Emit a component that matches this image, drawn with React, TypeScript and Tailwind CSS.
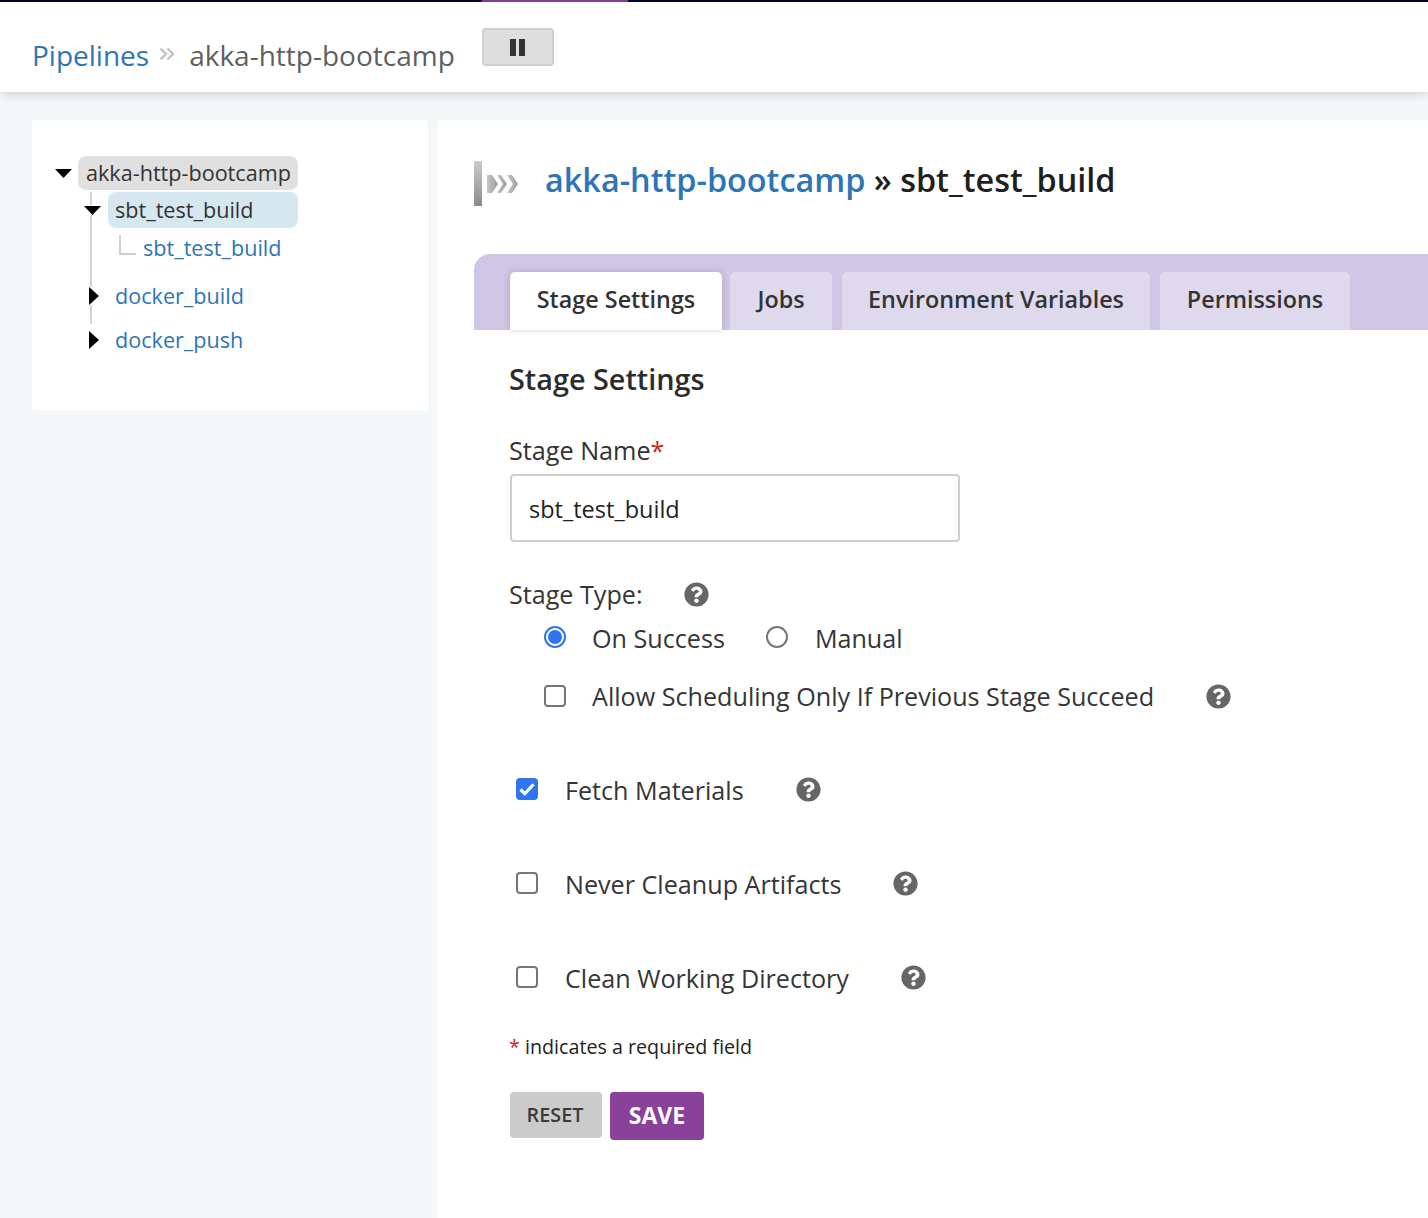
import { ReactNode } from "react";

const HelpIcon = () => (
  <svg width="25" height="25" viewBox="0 0 512 512" className="shrink-0 block">
    <path fill="#666666" d="M504 256c0 136.997-111.043 248-248 248S8 392.997 8 256C8 119.083 119.043 8 256 8s248 111.083 248 248zM262.655 90c-54.497 0-89.255 22.957-116.549 63.758-3.536 5.286-2.353 12.415 2.715 16.258l34.699 26.31c5.205 3.947 12.621 3.008 16.665-2.122 17.864-22.658 30.113-35.797 57.303-35.797 20.429 0 45.698 13.148 45.698 32.958 0 14.976-12.363 22.667-32.534 33.976C247.128 238.528 216 254.941 216 296v4c0 6.627 5.373 12 12 12h56c6.627 0 12-5.373 12-12v-1.333c0-28.462 83.186-29.647 83.186-106.667 0-58.002-60.165-102-116.531-102zM256 338c-25.365 0-46 20.635-46 46 0 25.364 20.635 46 46 46s46-20.636 46-46c0-25.365-20.635-46-46-46z" />
  </svg>
);

const CaretDown = () => (
  <svg width="17" height="10" viewBox="0 0 17 10" className="block"><path d="M0 1h17L8.5 10z" fill="#000" /></svg>
);

const CaretRight = () => (
  <svg width="10" height="18" viewBox="0 0 10 18" className="block"><path d="M0 0l10 9-10 9z" fill="#000" /></svg>
);

const Checkbox = ({ checked }: { checked?: boolean }) =>
  checked ? (
    <span className="block w-[22px] h-[22px] rounded-[4px] bg-[#2f74f0] flex items-center justify-center shrink-0">
      <svg width="18" height="18" viewBox="0 0 18 18" fill="none"><path d="M2.5 9.5l4.3 4.3 8.7-9.6" stroke="#fff" strokeWidth="3.2" /></svg>
    </span>
  ) : (
    <span className="block w-[22px] h-[22px] rounded-[4px] border-2 border-[#767676] bg-white shrink-0" />
  );

const CheckRow = ({ label, checked, cls }: { label: string; checked?: boolean; cls: string }) => (
  <div className={"flex items-center h-[30px] " + cls}>
    <span className="ml-[7px] mr-[27px] mb-[2px]"><Checkbox checked={checked} /></span>
    <span className="text-[25.15px] text-[#363636] relative top-px">{label}</span>
    <span className="ml-[52px] relative -top-px"><HelpIcon /></span>
  </div>
);

const Tab = ({ children, active, cls }: { children: ReactNode; active?: boolean; cls: string }) => (
  <div className={"h-[58px] pb-[2px] rounded-t-[5px] flex items-center justify-center text-[23.35px] font-semibold text-[#333] " + (active ? "bg-white shadow-[0_0_6px_rgba(0,0,0,0.18)] " : "bg-[#dfd9ee] ") + cls}>
    {children}
  </div>
);

export default function App() {
  return (
    <div className="w-[1428px] h-[1218px] overflow-hidden bg-[#f4f8f9] font-['Open_Sans',sans-serif] text-[#333]">
      <div className="h-[2px] bg-[#000728] flex">
        <div className="ml-[482px] w-[146px] bg-[#8a4199]" />
      </div>
      <header className="h-[90px] bg-white shadow-[0_2px_10px_rgba(0,0,0,0.16)] relative flex items-start pl-[32px]">
        <a className="text-[28px] text-[#2e75b6] mt-[34px] leading-[38px]">Pipelines</a>
        <svg width="16" height="14" viewBox="0 0 16 14" fill="none" className="ml-[10px] mt-[45px]">
          <path d="M1.5 1.5l5.5 5.500-5.500 5.500M8.500 1.500l5.500 5.500-5.500 5.500" stroke="#c2c2c2" strokeWidth="2.400" />
        </svg>
        <span className="text-[28px] text-[#5f5f5f] ml-[14px] mt-[34px] leading-[38px]">akka-http-bootcamp</span>
        <button className="ml-[27px] mt-[26px] w-[72px] h-[38px] rounded-[4px] bg-[#dedede] border-2 border-[#cfcfcf] flex items-center justify-center gap-[3px]">
          <span className="w-[6px] h-[17px] bg-[#333]" />
          <span className="w-[6px] h-[17px] bg-[#333]" />
        </button>
      </header>

      <div className="flex items-start pt-[28px] pl-[32px]">
        <aside className="w-[396px] h-[290px] bg-white rounded-[4px] shrink-0 pt-[36px] text-[21.6px]">
          <div className="relative h-[254px]">
            <span className="absolute left-[58px] top-[36px] w-[2px] h-[132px] bg-[#d4d4d4]" />
            <div className="flex items-center">
              <span className="ml-[23px] mr-[6px]"><CaretDown /></span>
              <span className="w-[220px] h-[34px] leading-[33px] pl-[8px] bg-[#e0e0e0] rounded-[8px] text-[#333] whitespace-nowrap">akka-http-bootcamp</span>
            </div>
            <div className="flex items-center mt-[2px]">
              <span className="ml-[52px] mr-[7px] relative bg-white"><CaretDown /></span>
              <span className="w-[190px] h-[36px] leading-[35px] pl-[7px] bg-[#d6e8ef] rounded-[8px] text-[#333]">sbt_test_build</span>
            </div>
            <div className="flex items-center h-[40px] pl-[87px]">
              <span className="w-[17px] h-[20px] border-l-2 border-b-2 border-[#cfcfcf] mb-[6px] mr-[7px]" />
              <a className="text-[#2e75b6]">sbt_test_build</a>
            </div>
            <div className="flex items-center h-[36px] mt-[10px]">
              <span className="ml-[57px] mr-[16px] relative bg-white flex"><CaretRight /></span>
              <a className="text-[#2e75b6]">docker_build</a>
            </div>
            <div className="flex items-center h-[36px] mt-[8px]">
              <span className="ml-[57px] mr-[16px] relative bg-white flex"><CaretRight /></span>
              <a className="text-[#2e75b6]">docker_push</a>
            </div>
          </div>
        </aside>

        <main className="ml-[10px] w-[990px] h-[1098px] bg-white pl-[36px] rounded-tl-[4px]">
          <div className="flex items-start h-[46px] mt-[38px]">
            <svg width="46" height="46" viewBox="0 0 46 46" className="shrink-0 mt-[3px]">
              <defs>
                <linearGradient id="bar" x1="0" y1="0" x2="0" y2="1">
                  <stop offset="0" stopColor="#cccccc" />
                  <stop offset="1" stopColor="#8a8a8a" />
                </linearGradient>
                <linearGradient id="chev" x1="0" y1="0" x2="1" y2="0">
                  <stop offset="0" stopColor="#c6c6c6" />
                  <stop offset="1" stopColor="#9c9c9c" />
                </linearGradient>
              </defs>
              <rect x="0" y="0" width="8" height="45" fill="url(#bar)" />
              <path d="M13 14h5l6 9-6 9h-5l0-18z" fill="url(#chev)" />
              <path d="M23 14h4l6 9-6 9h-4l6-9z" fill="url(#chev)" />
              <path d="M33 14h5l6 9-6 9h-5l6-9z" fill="url(#chev)" />
            </svg>
            <h1 className="ml-[25px] text-[32.4px] leading-[42px] font-semibold text-[#1f1f1f] whitespace-nowrap">
              <a className="text-[#2e75b6]">akka-http-bootcamp</a> » sbt_test_build
            </h1>
          </div>

          <div className="mt-[50px] h-[76px] bg-[#cfc6e6] rounded-tl-[16px] flex items-end pl-[36px]">
            <Tab active cls="w-[212px] mr-[8px]">Stage Settings</Tab>
            <Tab cls="w-[102px] mr-[10px]">Jobs</Tab>
            <Tab cls="w-[308px] mr-[10px]">Environment Variables</Tab>
            <Tab cls="w-[190px]">Permissions</Tab>
          </div>

          <div className="pl-[35px]">
            <h2 className="text-[28.8px] font-semibold text-[#2c2c2c] mt-[27px] leading-[44px]">Stage Settings</h2>
            <div className="text-[25.2px] text-[#333] mt-[31px] leading-[36px]">
              Stage Name<span className="text-[#c5281c]">*</span>
            </div>
            <input
              readOnly
              value="sbt_test_build"
              className="block mt-[6px] ml-px w-[450px] h-[68px] pt-[2px] border-2 border-[#cfcfcf] rounded-[4px] px-[17px] text-[23.5px] text-[#222] bg-white outline-none"
            />
            <div className="flex items-center mt-[36px] h-[34px]">
              <span className="text-[25.15px] text-[#363636]">Stage Type:</span>
              <span className="ml-[41px] relative -top-px"><HelpIcon /></span>
            </div>
            <div className="flex items-center h-[30px] mt-[12px] ml-[35px]">
              <span className="w-[22px] h-[22px] rounded-full border-2 border-[#2f74f0] bg-white flex items-center justify-center mb-[4px]">
                <span className="w-[14px] h-[14px] rounded-full bg-[#2f74f0]" />
              </span>
              <span className="text-[25.15px] text-[#363636] ml-[26px]">On Success</span>
              <span className="w-[22px] h-[22px] rounded-full border-2 border-[#767676] bg-white ml-[41px] mb-[4px]" />
              <span className="text-[25.15px] text-[#363636] ml-[27px]">Manual</span>
            </div>
            <div className="flex items-center h-[30px] mt-[28px] ml-[35px]">
              <span className="mb-[2px]"><Checkbox /></span>
              <span className="text-[25.15px] text-[#363636] ml-[26px]">Allow Scheduling Only If Previous Stage Succeed</span>
              <span className="ml-[52px] relative -top-px"><HelpIcon /></span>
            </div>
            <CheckRow checked label="Fetch Materials" cls="mt-[63px]" />
            <CheckRow label="Never Cleanup Artifacts" cls="mt-[64px]" />
            <CheckRow label="Clean Working Directory" cls="mt-[64px]" />
            <p className="text-[19.7px] text-[#222] mt-[39px] leading-[30px]">
              <span className="text-[#c5281c]">*</span> indicates a required field
            </p>
            <div className="flex gap-[8px] mt-[30px] ml-px items-start">
              <button className="w-[92px] h-[46px] pr-[2px] rounded-[4px] bg-[#cbcbcb] text-[19.8px] font-semibold text-[#3a3a3a]">RESET</button>
              <button className="w-[94px] h-[48px] pb-[2px] rounded-[4px] bg-[#8a4199] text-[23px] font-bold text-white">SAVE</button>
            </div>
          </div>
        </main>
      </div>
    </div>
  );
}
